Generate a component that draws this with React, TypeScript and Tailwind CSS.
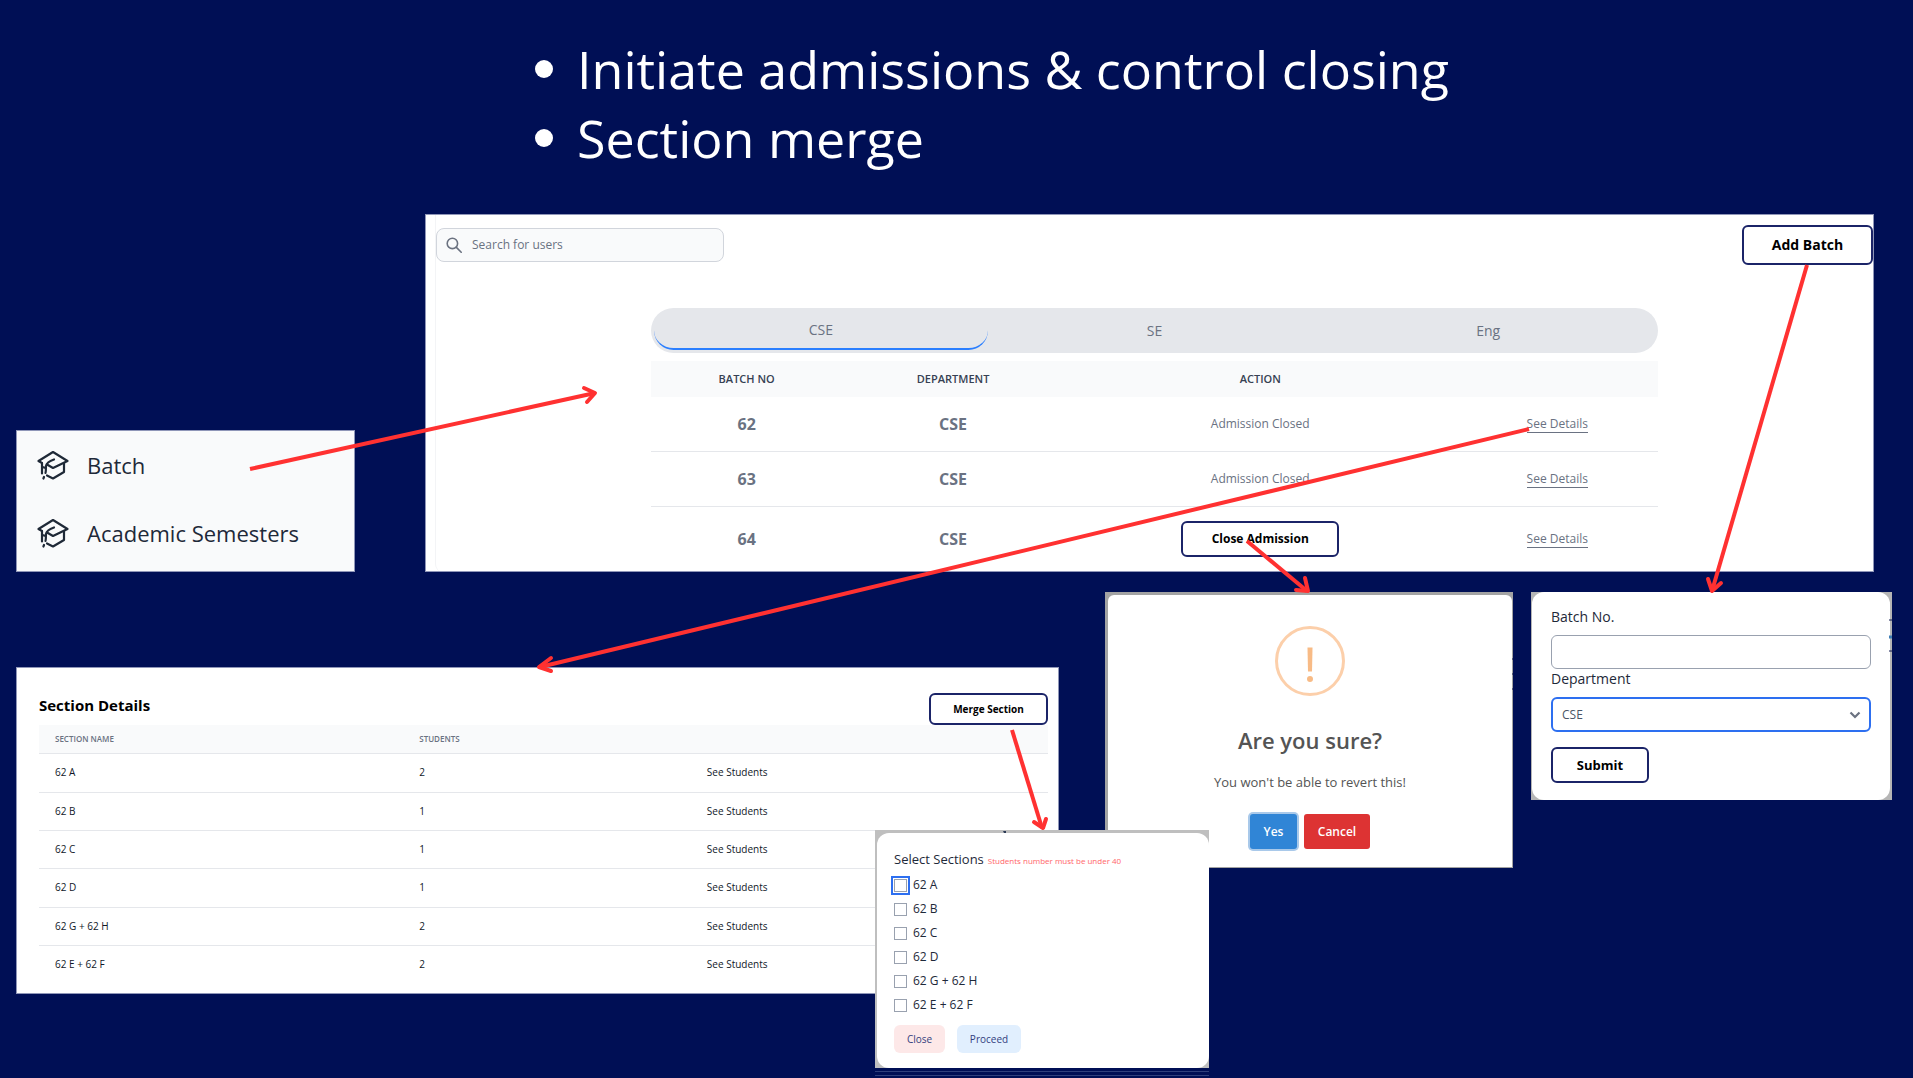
import React from "react";

const OUTLINE_BUTTON =
  "flex items-center justify-center rounded-md border-2 border-[#1b2468] bg-white font-bold text-black";

function CapIcon() {
  return (
    <svg viewBox="0 0 32 32" className="size-8 shrink-0" fill="none" stroke="#1f2937" strokeWidth="2.2" strokeLinejoin="round" strokeLinecap="round" aria-hidden="true">
      <path d="M5 14 1.500 12 16 3l14.500 9L16 19l-6-3.500" />
      <path d="M5 14v10.500M10 26.500 16 29.500l11-6.500V14" />
      <path d="M17 10.500C12.500 12 9.500 13.500 9 17c-.3 2.500.2 4.500-.5 7M7 28l-.6 1.500M5.500 18l3 1" />
    </svg>
  );
}

function Headline() {
  return (
    <ul className="ml-[535px] flex h-[214px] flex-col pt-[34px] text-[52px] leading-[69px] text-white">
      {["Initiate admissions & control closing", "Section merge"].map((t) => (
        <li key={t} className="flex items-center gap-6">
          <span className="size-[18px] rounded-full bg-white" />
          <span className="whitespace-nowrap">{t}</span>
        </li>
      ))}
    </ul>
  );
}

function SideMenu() {
  return (
    <nav className="flex h-[142px] w-[339px] shrink-0 flex-col border border-[#8f96b8] bg-[#f9fafb] pl-5 text-[22px] font-medium text-gray-800">
      {["Batch", "Academic Semesters"].map((t) => (
        <a key={t} href="#" className="flex h-[68px] items-center gap-[18px]">
          <CapIcon />
          <span>{t}</span>
        </a>
      ))}
    </nav>
  );
}

function BatchPanel() {
  const rows = [
    { no: "62", open: false },
    { no: "63", open: false },
    { no: "64", open: true },
  ];
  return (
    <section className="flex h-[358px] min-w-0 flex-1 flex-col overflow-hidden border border-[#8f96b8] bg-white">
      <div className="ml-[9px] flex-1 rounded-bl-lg border-l border-gray-100">
        <div className="flex items-start justify-between pt-[10px]">
          <label className="mt-[3px] flex h-[34px] w-[288px] items-center gap-[10px] rounded-lg border border-gray-300 bg-gray-50 px-[9px]">
            <svg viewBox="0 0 20 20" className="size-4" fill="none" stroke="#6b7280" strokeWidth="2" strokeLinecap="round" aria-hidden="true">
              <circle cx="8" cy="8" r="6.500" />
              <path d="m13 13 6 6" />
            </svg>
            <input type="search" aria-label="Search for users" placeholder="Search for users" className="min-w-0 flex-1 bg-transparent text-xs placeholder:text-gray-500 focus:outline-none" />
          </label>
          <button className={`${OUTLINE_BUTTON} h-10 w-[131px] text-sm`}>Add Batch</button>
        </div>
        <div className="mr-[215px] ml-[215px] mt-[43px]">
          <div role="tablist" className="flex h-[45px] rounded-full bg-gray-200 p-[3px] text-sm text-gray-500">
            <button role="tab" aria-selected="true" className="flex-1 rounded-full border-b-2 border-blue-500">CSE</button>
            <button role="tab" aria-selected="false" className="flex-1">SE</button>
            <button role="tab" aria-selected="false" className="flex-1">Eng</button>
          </div>
          <table className="mt-2 w-full table-fixed text-center text-xs text-gray-500">
            <colgroup>
              <col className="w-[19%]" />
              <col className="w-[22%]" />
              <col className="w-[39%]" />
              <col className="w-[20%]" />
            </colgroup>
            <thead>
              <tr className="h-9 bg-gray-50 text-[11px] text-gray-700">
                <th className="font-semibold">BATCH NO</th>
                <th className="font-semibold">DEPARTMENT</th>
                <th className="font-semibold">ACTION</th>
                <th />
              </tr>
            </thead>
            <tbody>
              {rows.map((r) => (
                <tr key={r.no} className="h-[55px] border-b border-gray-200 first:h-[54px] last:h-[66px] last:border-0">
                  <td className="text-base font-bold">{r.no}</td>
                  <td className="text-base font-bold">CSE</td>
                  <td>
                    {r.open ? (
                      <button className={`${OUTLINE_BUTTON} mx-auto h-9 w-[158px] text-xs`}>Close Admission</button>
                    ) : (
                      "Admission Closed"
                    )}
                  </td>
                  <td>
                    <a href="#" className="border-b border-gray-500">See Details</a>
                  </td>
                </tr>
              ))}
            </tbody>
          </table>
        </div>
      </div>
    </section>
  );
}

function SectionDetails() {
  const rows = [["62 A", 2], ["62 B", 1], ["62 C", 1], ["62 D", 1], ["62 G + 62 H", 2], ["62 E + 62 F", 2]];
  return (
    <section className="mt-[75px] h-[327px] min-w-0 flex-1 border border-[#8f96b8] bg-white pr-[10px] pl-[22px]">
      <div className="flex h-[57px] items-end justify-between">
        <h2 className="pb-[9px] text-[15px] font-bold text-black">Section Details</h2>
        <button className={`${OUTLINE_BUTTON} h-8 w-[119px] text-[10px]`}>Merge Section</button>
      </div>
      <table className="w-full table-fixed text-left text-[10px] text-gray-900">
        <colgroup>
          <col className="w-[36%]" />
          <col className="w-[29%]" />
          <col className="w-[35%]" />
        </colgroup>
        <thead>
          <tr className="h-7 border-b border-gray-200 bg-gray-50 text-[8px] text-gray-500">
            <th className="pl-4 font-semibold">SECTION NAME</th>
            <th className="pl-[17px] font-semibold">STUDENTS</th>
            <th />
          </tr>
        </thead>
        <tbody>
          {rows.map(([name, n]) => (
            <tr key={name} className="h-[38px] border-b border-gray-200 last:border-0 nth-[3n+1]:h-[39px]">
              <td className="pl-4">{name}</td>
              <td className="pl-[17px]">{n}</td>
              <td className="pl-3"><a href="#">See Students</a></td>
            </tr>
          ))}
        </tbody>
      </table>
    </section>
  );
}

function ConfirmDialog() {
  return (
    <section className="ml-[46px] h-[276px] w-[408px] shrink-0 bg-[#a3a3a3] pt-[3px] pr-px pb-px pl-[3px]">
      <div className="flex h-full flex-col items-center rounded-t-md bg-white pt-[31px]">
        <svg viewBox="0 0 70 70" className="size-[70px]" fill="none" aria-hidden="true">
          <circle cx="35" cy="35" r="33.500" stroke="#fccfaa" strokeWidth="3" />
          <path d="M32.500 21.500h5l-.5 24h-4z" fill="#f8bb86" />
          <circle cx="35" cy="53" r="3" fill="#f8bb86" />
        </svg>
        <h2 className="mt-7 text-[22px] leading-8 font-semibold text-[#545454]">Are you sure?</h2>
        <p className="mt-4 text-[13px] leading-5 text-[#545454]">You won't be able to revert this!</p>
        <div className="mt-[22px] flex gap-[7px] text-xs font-semibold text-white">
          <button className="h-[35px] w-[47px] rounded-[3px] bg-[#3085d6] ring-2 ring-[#a9c9ea]">Yes</button>
          <button className="h-[35px] w-[66px] rounded-[3px] bg-[#dd3333]">Cancel</button>
        </div>
      </div>
    </section>
  );
}

function BatchForm() {
  return (
    <section className="ml-[18px] h-[208px] w-[361px] shrink-0 bg-[#b5b5b5] pr-[2px] pl-px">
      <form className="flex h-full flex-col rounded-xl bg-white px-[19px] pt-[15px] text-sm text-gray-800">
        <label htmlFor="batch-no" className="leading-5">Batch No.</label>
        <input id="batch-no" className="mt-2 h-[34px] rounded-md border border-gray-400" />
        <label htmlFor="department" className="leading-5">Department</label>
        <div className="relative mt-2">
          <select id="department" className="h-[35px] w-full appearance-none rounded-md border-2 border-[#2d6ff0] bg-white px-[9px] text-xs text-gray-600">
            <option>CSE</option>
          </select>
          <svg viewBox="0 0 12 8" className="pointer-events-none absolute top-[14px] right-[10px] h-2 w-3" fill="none" stroke="#6b7280" strokeWidth="2.200" aria-hidden="true">
            <path d="m1.500 1.500 4.500 4.500 4.500-4.500" />
          </svg>
        </div>
        <button type="button" className={`${OUTLINE_BUTTON} mt-[15px] h-9 w-[98px] text-[13px]`}>Submit</button>
      </form>
    </section>
  );
}

function SelectSections() {
  return (
    <section className="absolute top-[830px] left-[875px] w-[334px]">
      <div className="bg-[#bfbfbf] pt-[3px] pl-[2px]">
        <div className="h-[235px] rounded-xl bg-white pt-[14px] pl-[17px]">
          <h2 className="flex items-baseline gap-1 text-[13px] leading-6 text-gray-800">
            <span className="font-medium">Select Sections</span>
            <small className="text-[8px] text-red-400">Students number must be under 40</small>
          </h2>
          {["62 A", "62 B", "62 C", "62 D", "62 G + 62 H", "62 E + 62 F"].map((t, i) => (
            <label key={t} className="flex h-6 items-center gap-[6px] text-xs text-gray-800">
              <input
                type="checkbox"
                className={i === 0
                  ? "size-[13px] appearance-none border border-gray-400 bg-white outline-2 outline-offset-1 outline-[#2d6ff0]"
                  : "size-[13px] appearance-none border border-gray-400 bg-white"}
              />
              {t}
            </label>
          ))}
          <div className="mt-2 flex gap-3 text-[10px] font-medium text-[#33407e]">
            <button className="h-7 w-[51px] rounded-md bg-[#fde8e8]">Close</button>
            <button className="h-7 w-16 rounded-md bg-[#e1effe]">Proceed</button>
          </div>
        </div>
      </div>
      <div className="flex h-[10px] flex-col gap-[3px] bg-[#000f55] pt-[3px]">
        <hr className="border-[#30407c]" />
        <hr className="border-[#30407c]" />
      </div>
    </section>
  );
}

function Arrows() {
  return (
    <svg viewBox="0 0 1913 1078" className="pointer-events-none absolute top-0 left-0 w-full" fill="none" aria-hidden="true">
      <g stroke="#ff3131" strokeWidth="4" strokeLinejoin="round">
        <path d="M250 469 595 393" />
        <path d="M1529 429 540 667" />
        <path d="M1247 541 1307 591" />
        <path d="M1807 265 1712 591" />
        <path d="M1012 730 1042 828" />
        <g strokeLinecap="round">
          <path d="M584 388l11 5-8 9" />
          <path d="M551 658l-12 9 12 4" />
          <path d="M1305 578l3 13-12-1" />
          <path d="M1708 579l4 12 9-8" />
          <path d="M1034 822l9 6 3-9" />
        </g>
      </g>
      <path d="M1889 620h3M1889 651h3M1512 659h1M1512 674h1M1512 689h1" stroke="#10194f" />
      <path d="M1889 637h3" stroke="#3f7fb5" strokeWidth="3" />
      <path d="M1003 831h3v2h-2z" fill="#2b3a55" />
    </svg>
  );
}

export default function App() {
  return (
    <main className="relative min-h-screen overflow-hidden bg-[#000f55] font-['Open_Sans','Noto_Sans',sans-serif]">
      <Headline />
      <div className="flex items-end gap-[70px] pr-[39px] pl-4">
        <SideMenu />
        <BatchPanel />
      </div>
      <div className="mt-5 flex items-start pr-[21px] pl-4">
        <SectionDetails />
        <ConfirmDialog />
        <BatchForm />
      </div>
      <SelectSections />
      <Arrows />
    </main>
  );
}
